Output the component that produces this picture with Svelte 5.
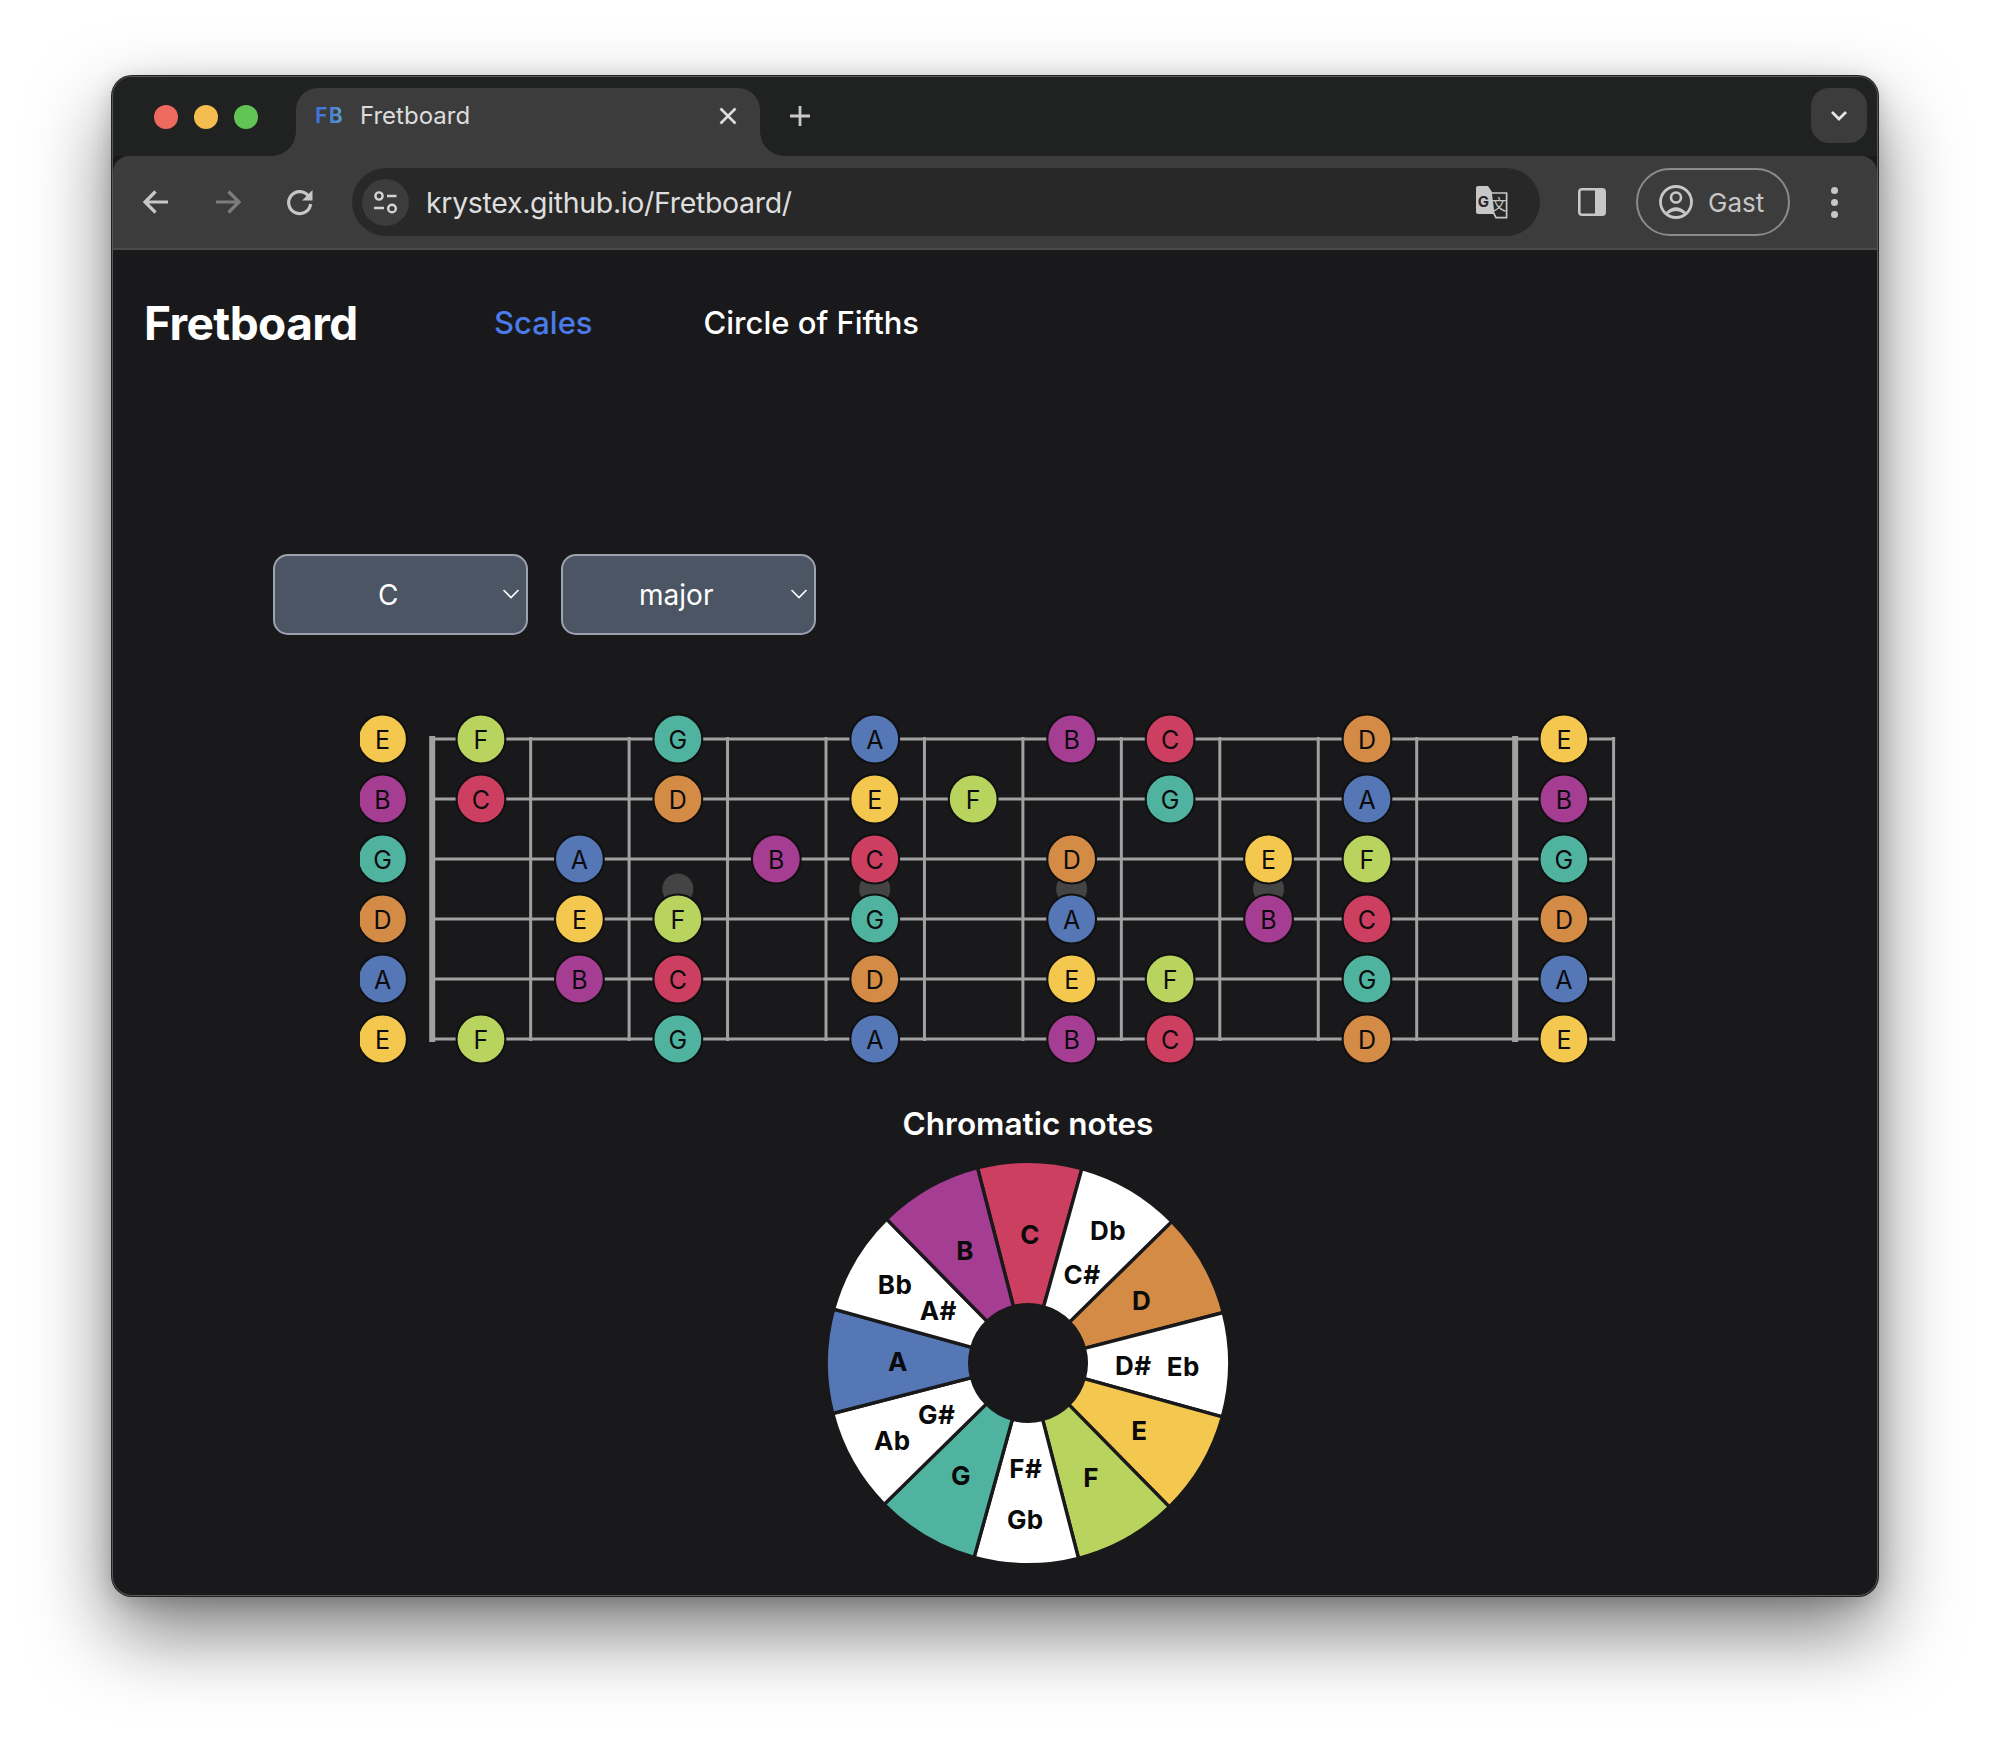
<script>
  const colors = {
    C: '#cd3f61', D: '#d38b45', E: '#f4c84f', F: '#b9d35f',
    G: '#50b3a0', A: '#5577b5', B: '#a53d92'
  };
  const chromatic = ['C', null, 'D', null, 'E', 'F', null, 'G', null, 'A', null, 'B'];
  const tuning = [4, 11, 7, 2, 9, 4]; // high E on top

  const fretStep = 98.45;
  const nutX = 72.2;
  const noteX = (n) => 22.5 + fretStep * n;
  const stringY = (i) => 39 + 60 * i;

  const strings = tuning.map((root) => {
    const notes = [];
    for (let fret = 0; fret <= 12; fret++) {
      const name = chromatic[(root + fret) % 12];
      if (name) notes.push({ fret, name });
    }
    return notes;
  });

  const frets = Array.from({ length: 13 }, (_, n) => n);
  const isThick = (n) => n === 0 || n === 11;
  const inlays = [3, 5, 7, 9];

  // chromatic wheel, clockwise from C on top
  const cx = 208;
  const cy = 208;
  const outer = 201.7;
  const inner = 58.3;
  const turn = 0.5;

  function wedge(i) {
    const a0 = ((i * 30 - 15 - 90 + turn) * Math.PI) / 180;
    const a1 = ((i * 30 + 15 - 90 + turn) * Math.PI) / 180;
    const pt = (r, a) => `${(cx + r * Math.cos(a)).toFixed(2)} ${(cy + r * Math.sin(a)).toFixed(2)}`;
    return `M${pt(inner, a0)} L${pt(outer, a0)} A${outer} ${outer} 0 0 1 ${pt(outer, a1)} L${pt(inner, a1)} A${inner} ${inner} 0 0 0 ${pt(inner, a0)} Z`;
  }

  // label centres, measured off the wheel
  const labels = [
    ['C', 1030, 1234], ['Db', 1108, 1230.3], ['C#', 1082, 1274], ['D', 1141.7, 1300.7],
    ['D#', 1133.3, 1365.7], ['Eb', 1183.3, 1366.7], ['E', 1139.3, 1430.3], ['F', 1091, 1477.7],
    ['F#', 1025.7, 1468.3], ['Gb', 1025.3, 1519.3], ['G', 961, 1475], ['G#', 936.7, 1414],
    ['Ab', 892.3, 1440], ['A', 898, 1361.7], ['A#', 938.3, 1310.7], ['Bb', 895, 1284.3],
    ['B', 965, 1250]
  ].map(([t, x, y]) => ({ t, x: x - 820, y: y - 1155 }));
</script>

<div class="page">
  <div class="window">
    <div class="tabstrip">
      <div class="lights">
        <span class="light red"></span>
        <span class="light yellow"></span>
        <span class="light green"></span>
      </div>
      <div class="tab">
        <span class="favicon">FB</span>
        <span class="tab-title">Fretboard</span>
        <svg class="tab-close" width="18" height="18" viewBox="0 0 18 18">
          <path d="M1.5 1.5 L16.5 16.5 M16.5 1.5 L1.5 16.5" stroke="#dcdcdc" stroke-width="2.6" fill="none" />
        </svg>
      </div>
      <svg class="new-tab" width="24" height="24" viewBox="0 0 24 24">
        <path d="M12 2 V22 M2 12 H22" stroke="#c9c9c9" stroke-width="2.8" fill="none" />
      </svg>
      <div class="tab-menu">
        <svg width="20" height="14" viewBox="0 0 20 14">
          <path d="M3 3 L10 10 L17 3" stroke="#e6e6e6" stroke-width="2.8" fill="none" />
        </svg>
      </div>
    </div>

    <div class="toolbar">
      <div class="nav">
        <svg width="48" height="48" viewBox="0 0 48 48">
          <path d="M36 24 H14 M23.5 13.5 L13 24 L23.5 34.5" stroke="#c7c7c7" stroke-width="3.2" fill="none" />
        </svg>
        <svg width="48" height="48" viewBox="0 0 48 48">
          <path d="M12 24 H34 M24.5 13.5 L35 24 L24.5 34.5" stroke="#7d7d7d" stroke-width="3.2" fill="none" />
        </svg>
        <svg width="48" height="48" viewBox="0 0 48 48">
          <path d="M32.6 18.2 A11 11 0 1 0 34.6 26" stroke="#c7c7c7" stroke-width="3.2" fill="none" />
          <path d="M36.5 12 V22.5 H26 Z" fill="#c7c7c7" />
        </svg>
      </div>

      <div class="omnibox">
        <span class="site-icon">
          <svg width="47" height="47" viewBox="0 0 47 47">
            <circle cx="17" cy="17" r="3.6" stroke="#d4d4d4" stroke-width="2.4" fill="none" />
            <path d="M25 17 H34.5 M12 29 H22" stroke="#d4d4d4" stroke-width="2.6" fill="none" />
            <circle cx="30" cy="29.5" r="3.8" stroke="#d4d4d4" stroke-width="2.4" fill="none" />
          </svg>
        </span>
        <span class="url">krystex.github.io/Fretboard/</span>
        <svg class="translate" width="34" height="34" viewBox="0 0 34 34">
          <path d="M4 1 H14 L18 7 L22 29 H4 Q2 29 2 27 V3 Q2 1 4 1 Z" fill="#c7c7c7" />
          <text x="9.5" y="22" class="translate-g">G</text>
          <path d="M17 8 H32.6 V32.6 H22 L19.6 28 Z" fill="#282828" stroke="#c7c7c7" stroke-width="1.7" />
          <text x="25" y="25" class="translate-cjk">文</text>
        </svg>
      </div>

      <svg class="panel" width="28" height="28" viewBox="0 0 28 28">
        <rect x="1.3" y="1.3" width="25.4" height="25.4" rx="2.5" fill="none" stroke="#c7c7c7" stroke-width="2.6" />
        <rect x="17" y="1.3" width="9.7" height="25.4" fill="#c7c7c7" />
      </svg>

      <div class="profile">
        <svg width="36" height="36" viewBox="0 0 36 36">
          <circle cx="18" cy="18" r="15.5" fill="none" stroke="#c7c7c7" stroke-width="2.8" />
          <circle cx="18" cy="13.5" r="5" fill="none" stroke="#c7c7c7" stroke-width="2.6" />
          <path d="M8 28 Q18 18.5 28 28 L26 30 Q18 24 10 30 Z" fill="#c7c7c7" />
        </svg>
        <span>Gast</span>
      </div>

      <div class="dots"><i></i><i></i><i></i></div>
    </div>

    <main class="content">
      <header class="header">
        <h1>Fretboard</h1>
        <nav>
          <a class="active" href="#scales">Scales</a>
          <a href="#circle">Circle of Fifths</a>
        </nav>
      </header>

      <div class="selects">
        <div class="select">
          <select>
            <option>C</option>
          </select>
          <svg class="caret" width="18" height="10" viewBox="0 0 18 10">
            <path d="M1.5 1 L9 8.5 L16.5 1" stroke="#fff" stroke-width="1.6" fill="none" />
          </svg>
        </div>
        <div class="select">
          <select>
            <option>major</option>
          </select>
          <svg class="caret" width="18" height="10" viewBox="0 0 18 10">
            <path d="M1.5 1 L9 8.5 L16.5 1" stroke="#fff" stroke-width="1.6" fill="none" />
          </svg>
        </div>
      </div>

      <svg class="fretboard" width="1280" height="370" viewBox="0 0 1280 370">
        {#each inlays as n}
          <circle cx={noteX(n)} cy="189" r="15.5" fill="#444" />
        {/each}
        {#each tuning as _, i}
          <line x1={nutX} x2={nutX + fretStep * 12 + 1.5} y1={stringY(i)} y2={stringY(i)} class="wire" />
        {/each}
        {#each frets as n}
          <line
            x1={nutX + fretStep * n}
            x2={nutX + fretStep * n}
            y1={isThick(n) ? 36 : 37}
            y2={isThick(n) ? 342 : 341}
            class="wire"
            class:thick={isThick(n)}
          />
        {/each}
        {#each strings as notes, i}
          {#each notes as note}
            <circle cx={noteX(note.fret)} cy={stringY(i)} r="24.4" fill={colors[note.name]} stroke="#101012" stroke-width="2" />
            <text x={noteX(note.fret)} y={stringY(i) + 1} class="note">{note.name}</text>
          {/each}
        {/each}
      </svg>

      <section class="wheel-section">
        <h2>Chromatic notes</h2>
        <svg class="wheel" width="416" height="416" viewBox="0 0 416 416">
          {#each chromatic as name, i}
            <path d={wedge(i)} fill={name ? colors[name] : '#fff'} stroke="#19191b" stroke-width="3.4" />
          {/each}
          {#each labels as label}
            <text x={label.x} y={label.y} class="wheel-label">{label.t}</text>
          {/each}
        </svg>
      </section>
    </main>
  </div>
</div>

<style>
  :global(body) {
    margin: 0;
    background: #fff;
  }

  .page {
    box-sizing: border-box;
    width: 1990px;
    height: 1744px;
    padding: 76px 0 0 112px;
    overflow: hidden;
    font-family: Inter, "Liberation Sans", sans-serif;
  }

  .window {
    box-sizing: border-box;
    width: 1766px;
    height: 1520px;
    border: 1px solid #58585a;
    border-radius: 20px;
    background: #19191b;
    overflow: hidden;
    box-shadow: 0 0 0 1px #222, 0 36px 80px rgba(0, 0, 0, 0.52), 0 6px 22px rgba(0, 0, 0, 0.18);
    display: flex;
    flex-direction: column;
  }

  .tabstrip {
    height: 79px;
    flex: none;
    background: #202221;
    display: flex;
    align-items: flex-end;
  }

  .lights {
    display: flex;
    gap: 16px;
    width: 183px;
    box-sizing: border-box;
    padding: 0 0 27px 41px;
  }

  .light {
    width: 24px;
    height: 24px;
    border-radius: 50%;
  }

  .red { background: #ee6a5f; }
  .yellow { background: #f5bd4f; }
  .green { background: #61c454; }

  .tab {
    position: relative;
    width: 464px;
    height: 68px;
    box-sizing: border-box;
    background: #3c3c3c;
    border-radius: 22px 22px 0 0;
    display: flex;
    align-items: flex-start;
    padding: 15px 23px 0 19px;
    color: #dcdcdc;
  }

  .tab::before,
  .tab::after {
    content: "";
    position: absolute;
    bottom: 0;
    width: 24px;
    height: 24px;
  }

  .tab::before {
    left: -24px;
    background: radial-gradient(circle at 0 0, transparent 23.5px, #3c3c3c 24px);
  }

  .tab::after {
    right: -24px;
    background: radial-gradient(circle at 100% 0, transparent 23.5px, #3c3c3c 24px);
  }

  .favicon {
    width: 45px;
    font-size: 21px;
    line-height: 26px;
    font-weight: 700;
    letter-spacing: 1.5px;
    background: linear-gradient(90deg, #3f6fe0 0%, #4a84d4 40%, #6ab4b8 75%);
    background-clip: text;
    -webkit-background-clip: text;
    color: transparent;
  }

  .tab-title {
    flex: 1;
    font-size: 24px;
    line-height: 26px;
  }

  .tab-close {
    margin-top: 4px;
  }

  .new-tab {
    margin: 0 0 28px 28px;
  }

  .tab-menu {
    margin: 0 10px 13px auto;
    width: 56px;
    height: 55px;
    background: #3c3c3c;
    border-radius: 18px;
    display: flex;
    align-items: center;
    justify-content: center;
  }

  .toolbar {
    height: 92px;
    flex: none;
    box-sizing: content-box;
    background: #3c3c3c;
    border-bottom: 2px solid #4b4b4b;
    border-radius: 16px 16px 0 0;
    display: flex;
    align-items: center;
    color: #c7c7c7;
  }

  .nav {
    display: flex;
    gap: 24px;
    padding-left: 19px;
    width: 239px;
    box-sizing: border-box;
  }

  .omnibox {
    width: 1188px;
    height: 68px;
    box-sizing: border-box;
    background: #282828;
    border-radius: 34px;
    display: flex;
    align-items: center;
    padding: 0 32px 0 10px;
  }

  .site-icon {
    width: 47px;
    height: 47px;
    border-radius: 50%;
    background: #3c3c3c;
    display: block;
  }

  .url {
    margin-left: 17px;
    flex: 1;
    font-size: 28.5px;
    letter-spacing: -0.33px;
    color: #dedede;
  }

  .translate-g {
    font: 700 15px Inter, sans-serif;
    fill: #282828;
    text-anchor: middle;
  }

  .translate-cjk {
    font: 400 15px "Noto Sans CJK SC", sans-serif;
    fill: #c7c7c7;
    text-anchor: middle;
  }

  .panel {
    margin-left: 38px;
  }

  .profile {
    margin-left: 30px;
    width: 154px;
    height: 68px;
    box-sizing: border-box;
    border: 2px solid #8b8b8b;
    border-radius: 34px;
    display: flex;
    align-items: center;
    gap: 14px;
    padding-left: 20px;
    font-size: 26px;
  }

  .dots {
    margin-left: 41px;
    display: flex;
    flex-direction: column;
    gap: 5px;
  }

  .dots i {
    width: 7px;
    height: 7px;
    border-radius: 50%;
    background: #c7c7c7;
  }

  .content {
    flex: 1;
    min-height: 0;
    color: #fff;
  }

  .header {
    display: flex;
    align-items: center;
    height: 146px;
    padding-left: 31px;
  }

  h1 {
    margin: 0;
    width: 350px;
    font-size: 46px;
    font-weight: 700;
    letter-spacing: -0.6px;
  }

  nav {
    display: flex;
    gap: 111px;
    margin-top: -2px;
  }

  nav a {
    color: #fff;
    font-size: 31px;
    font-weight: 500;
    text-decoration: none;
  }

  nav a.active {
    color: #4a7be8;
  }

  .selects {
    display: flex;
    gap: 32.5px;
    margin: 158px 0 0 159.5px;
  }

  .select {
    position: relative;
    width: 255.5px;
    height: 81px;
  }

  select {
    appearance: none;
    width: 100%;
    height: 100%;
    box-sizing: border-box;
    border: 2px solid #9ca3af;
    border-radius: 15px;
    background: #4b5563;
    color: #fff;
    font: 400 28px Inter, sans-serif;
    text-align: center;
    padding: 0 24px 0 0;
  }

  .caret {
    position: absolute;
    right: 8px;
    top: 35px;
    pointer-events: none;
  }

  .fretboard {
    display: block;
    margin: 65px 0 0 247px;
  }

  .wire {
    stroke: #a1a1a1;
    stroke-width: 3;
  }

  .wire.thick {
    stroke-width: 6;
  }

  .note {
    font: 400 25px Inter, sans-serif;
    fill: #0c0c0e;
    text-anchor: middle;
    dominant-baseline: central;
  }

  .wheel-section {
    display: flex;
    flex-direction: column;
    align-items: center;
    padding-left: 66px;
  }

  h2 {
    margin: 35px 0 12px;
    font-size: 31.5px;
    line-height: 38px;
    font-weight: 600;
  }

  .wheel {
    display: block;
  }

  .wheel-label {
    font: 700 26px Inter, sans-serif;
    letter-spacing: 0.4px;
    fill: #0a0a0a;
    text-anchor: middle;
    dominant-baseline: central;
  }
</style>
